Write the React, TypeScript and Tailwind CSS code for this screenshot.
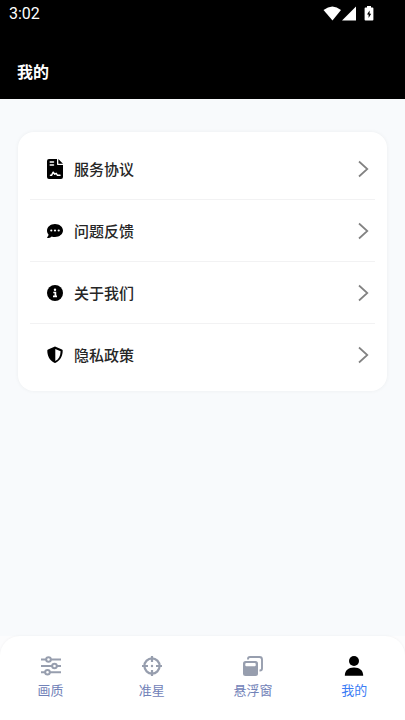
import type { ReactNode } from 'react';

interface MenuItem {
    label: string;
    icon: ReactNode;
}

interface TabItem {
    label: string;
    icon: ReactNode;
    active?: boolean;
}

const menuItems: MenuItem[] = [
    { label: '服务协议', icon: <AgreementIcon /> },
    { label: '问题反馈', icon: <FeedbackIcon /> },
    { label: '关于我们', icon: <AboutIcon /> },
    { label: '隐私政策', icon: <PrivacyIcon /> },
];

const tabItems: TabItem[] = [
    { label: '画质', icon: <SlidersIcon /> },
    { label: '准星', icon: <CrosshairIcon /> },
    { label: '悬浮窗', icon: <WindowsIcon /> },
    { label: '我的', icon: <PersonIcon />, active: true },
];

export default function App() {
    return (
        <div className="flex min-h-screen flex-col bg-[#f8fafc] font-['Noto_Sans_CJK_SC',sans-serif]">
            <header className="bg-black pb-3.5 text-white">
                <StatusBar />
                <h1 className="px-[17px] pt-[29px] text-base leading-7 font-bold">我的</h1>
            </header>

            <main className="flex-1 px-[18px] pt-[33px]">
                <ul className="divide-y divide-[#f2f2f3] rounded-2xl bg-white px-3 py-1.5 shadow-[0_0_4px_rgba(0,0,0,0.05)]">
                    {menuItems.map((item) => (
                        <li key={item.label}>
                            <button type="button" className="flex h-[61px] w-full items-center pr-1.5 pl-[17px] text-left">
                                <span className="flex w-4 justify-center">{item.icon}</span>
                                <span className="ml-[11px] flex-1 text-[15px] leading-6 font-medium text-[#262626]">
                                    {item.label}
                                </span>
                                <ChevronIcon />
                            </button>
                        </li>
                    ))}
                </ul>
            </main>

            <TabBar />
        </div>
    );
}

function StatusBar() {
    return (
        <div className="flex h-7 items-center justify-between pr-[30px] pl-[9px]">
            <span className="font-[Roboto,sans-serif] text-base leading-7 font-normal">3:02</span>
            <svg className="h-4 w-[52px]" viewBox="0 0 52 16" fill="currentColor">
                <path d="M.5 4Q9.500 -3 18 4L9.500 14.500Z" />
                <path d="M33 .5v14H19z" />
                <path
                    fillRule="evenodd"
                    d="M42.500 1.500h1.500V0h4v1.500h1.500q.9 0 .9.900v11.200q0 .9-.9.900h-7q-.9 0-.9-.9V2.400q0-.9.900-.9zM46.600 4.500 44 8.600h1.600v3.500L48.200 7.800h-1.600z"
                />
            </svg>
        </div>
    );
}

/** Bottom navigation */
function TabBar() {
    return (
        <div className="bg-[#fcfcfd]">
            <nav className="flex h-[84px] rounded-t-[20px] bg-white shadow-[0_0_3px_rgba(0,0,0,0.05)]">
                {tabItems.map((tab) => (
                    <button
                        key={tab.label}
                        type="button"
                        aria-current={tab.active ? 'page' : undefined}
                        className={`flex flex-1 flex-col items-center gap-0.5 pt-[18px] text-[13px] leading-5 ${
                            tab.active ? 'text-[#3b7cf5]' : 'text-[#7182b8]'
                        }`}
                    >
                        {tab.icon}
                        {tab.label}
                    </button>
                ))}
            </nav>
        </div>
    );
}

function ChevronIcon() {
    return (
        <svg className="h-5 w-3" viewBox="0 0 12 20" fill="none" stroke="#828282" strokeWidth="1.7">
            <path d="M2 2.500 10.300 10 2 17.500" />
        </svg>
    );
}

function AgreementIcon() {
    return (
        <svg className="h-5 w-4" viewBox="0 0 16 20">
            <path d="M2 0h8v5.200q0 .8.800.8H16v12q0 2-2 2H2q-2 0-2-2V2Q0 0 2 0z" />
            <path d="M11.300 0 16 4.800h-4.700z" />
            <path
                d="M3.200 3h3.300M3.200 6h3.300M3.500 16.300h1L6.200 13.200l1.600 2 1.400-.8 1.300 1.900H13"
                fill="none"
                stroke="#fff"
                strokeWidth="1.500"
                strokeLinecap="round"
                strokeLinejoin="round"
            />
        </svg>
    );
}

function FeedbackIcon() {
    return (
        <svg className="h-4 w-4" viewBox="0 0 16 16">
            <path d="M8 1c4.400 0 8 2.900 8 6.500S12.400 14 8 14c-1.200 0-2.300-.2-3.300-.6C3.600 14.300 2 15 .5 15c-.5 0-.6-.5-.3-.8.700-.7 1.200-1.600 1.400-2.500C.600 10.500 0 9.100 0 7.500 0 3.900 3.600 1 8 1z" />
            <circle cx="4.300" cy="7.500" r="1.100" fill="#fff" />
            <circle cx="8" cy="7.500" r="1.100" fill="#fff" />
            <circle cx="11.700" cy="7.500" r="1.100" fill="#fff" />
        </svg>
    );
}

function AboutIcon() {
    return (
        <svg className="h-4 w-4" viewBox="0 0 16 16">
            <circle cx="8" cy="8" r="8" />
            <circle cx="8" cy="4.700" r="1.200" fill="#fff" />
            <path d="M6.300 7.500h2.100V11M6 11.300h4" fill="none" stroke="#fff" strokeWidth="1.700" />
        </svg>
    );
}

function PrivacyIcon() {
    return (
        <svg className="h-[18px] w-4" viewBox="0 0 16 18">
            <path
                fillRule="evenodd"
                d="M8 .6 15 3.500q.7.300.7 1.100c0 5.300-2.200 9.900-7 12.200q-.7.300-1.400 0C2.500 14.500.300 9.900.300 4.600q0-.8.700-1.100zM8.300 2.900v12.200c3.500-1.900 5.200-5.400 5.300-9.900z"
            />
        </svg>
    );
}

function SlidersIcon() {
    return (
        <svg className="h-6 w-6" viewBox="0 0 24 24" fill="none" stroke="#979eae" strokeWidth="2">
            <path d="M2 5.500h5M12 5.500h10M2 12h11M18 12h4M2 18.300h4M11 18.300h11" />
            <circle cx="9.500" cy="5.500" r="2.300" />
            <circle cx="15.500" cy="12" r="2.300" />
            <circle cx="8.500" cy="18.300" r="2.300" />
        </svg>
    );
}

function CrosshairIcon() {
    return (
        <svg className="h-6 w-6" viewBox="0 0 24 24" fill="none" stroke="#979eae" strokeWidth="2.200">
            <circle cx="12" cy="12" r="7.600" />
            <path d="M12 2v6M12 16v6M2 12h6M16 12h6" />
            <circle cx="12" cy="12" r="1.200" fill="#979eae" stroke="none" />
        </svg>
    );
}

function WindowsIcon() {
    return (
        <svg className="h-6 w-6" viewBox="0 0 24 24">
            <path
                d="M7 5.500V5q0-2 2-2h9.500q2.500 0 2.500 2.500v9q0 2-2 2h-.5"
                fill="none"
                stroke="#979eae"
                strokeWidth="1.900"
            />
            <rect x="2" y="7" width="15" height="15" rx="2.500" fill="#979eae" />
            <rect x="4.300" y="9" width="10.400" height="3.200" rx="1" fill="#fff" />
        </svg>
    );
}

function PersonIcon() {
    return (
        <svg className="h-6 w-6" viewBox="0 0 24 24">
            <circle cx="12" cy="7" r="5" />
            <path d="M2.800 21.800c0-5.300 3.400-8.300 9.200-8.300s9.200 3 9.200 8.300z" />
        </svg>
    );
}
